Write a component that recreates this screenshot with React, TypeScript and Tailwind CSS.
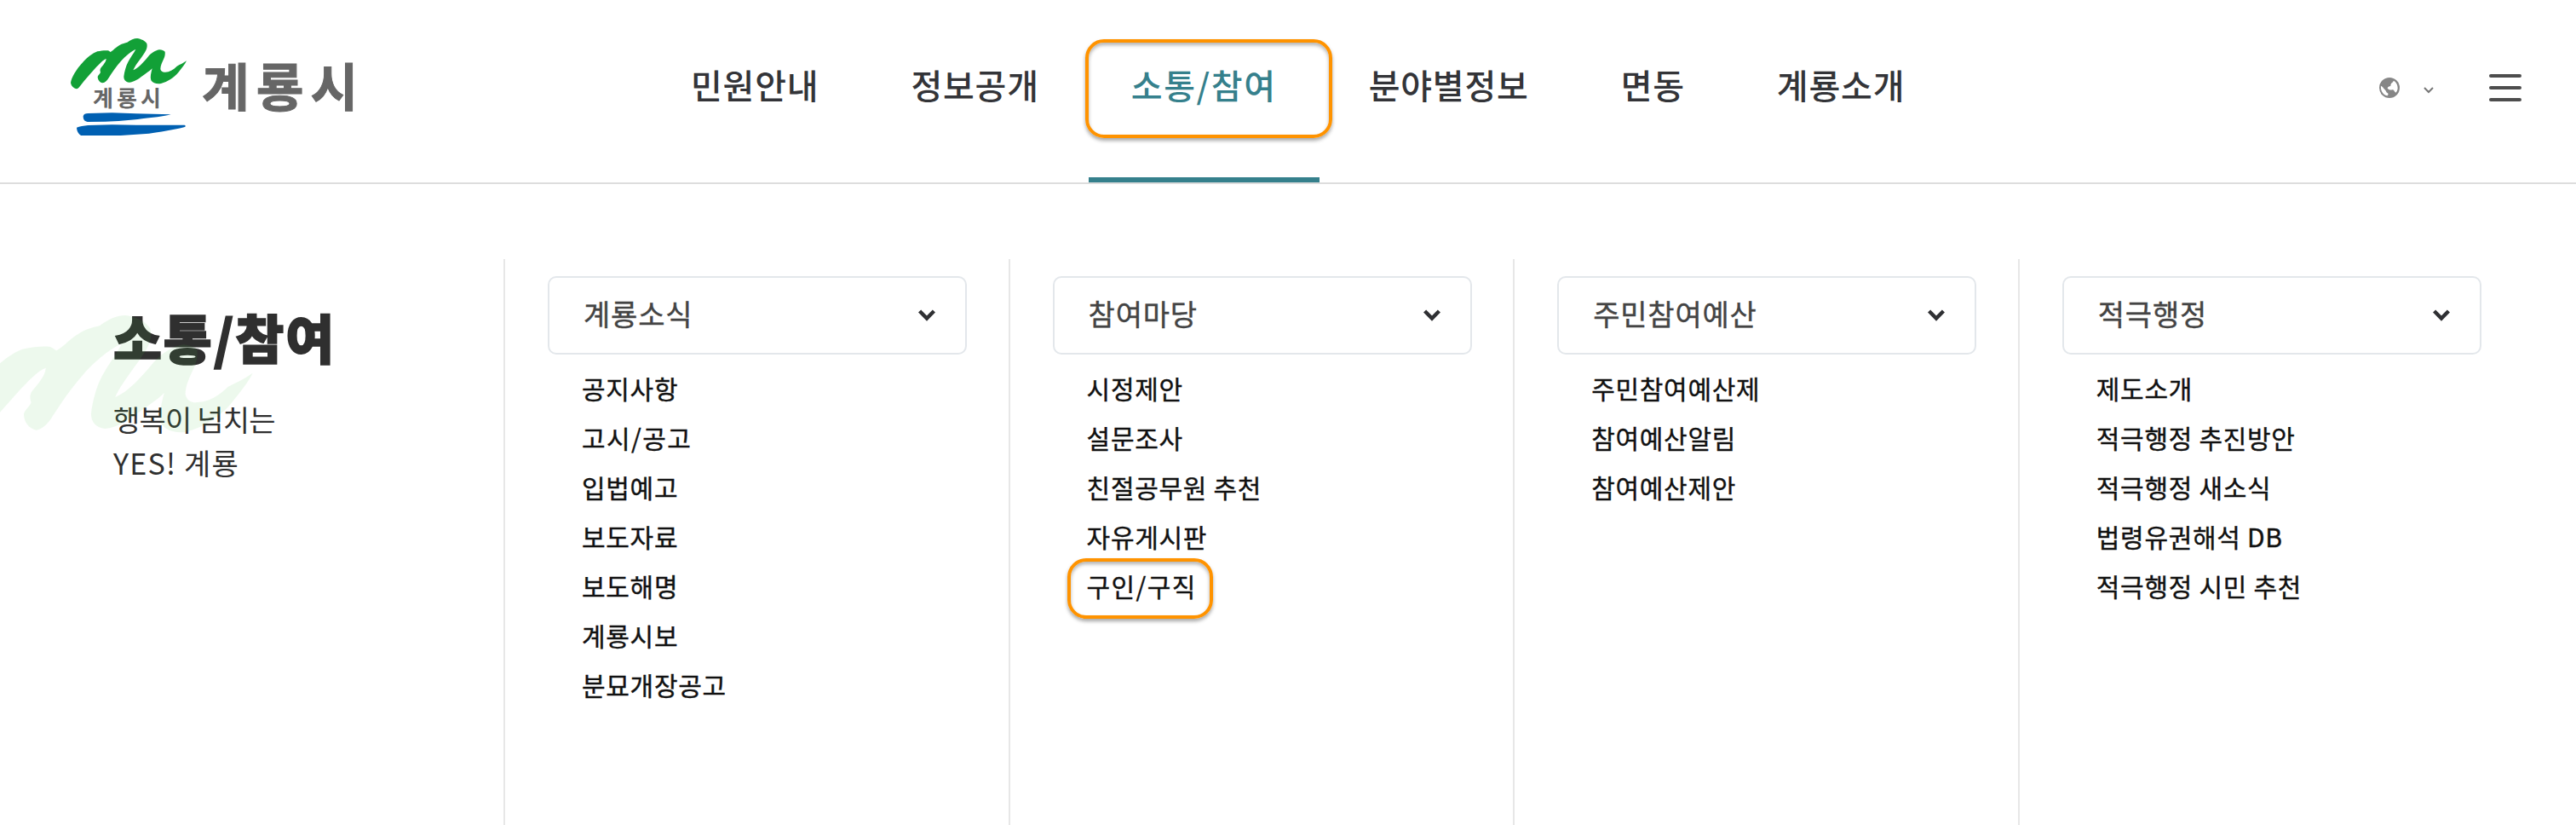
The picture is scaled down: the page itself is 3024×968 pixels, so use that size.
type MenuGroup = {
  title: string;
  links: string[];
};

const MARK =
  'M69 230C72 210 88 184 110 160C128 141 146 126 163 120C177 117 190 116 200 117C204 118 206 121 209 122C220 116 228 105 241 98C250 92 262 90 268 88C280 79 292 74 303 74C317 76 332 83 337 92C339 100 338 108 334 116C325 135 299 163 289 186C308 178 325 158 341 139C352 126 368 116 382 114C390 115 397 117 401 121C402 128 401 137 397 145C391 158 385 170 385 182C387 191 394 194 402 193C417 192 430 185 443 172C455 166 466 161 477 153C472 164 461 178 448 194C433 212 410 227 387 233C374 236 358 232 352 222C348 210 352 196 356 180C346 190 333 198 322 206C308 217 292 228 275 229C262 227 256 220 256 208C258 192 263 172 271 157C279 142 290 128 298 113C284 118 262 136 246 154C229 173 215 194 204 211C198 221 190 230 181 231C171 229 164 220 164 209C166 202 173 198 174 193C172 188 172 183 175 178C183 168 193 158 194 146C184 149 170 164 155 180C137 200 119 220 105 238C100 245 96 250 90 252C80 249 71 244 69 230Z';

const nav = [
  { label: '민원안내', active: false },
  { label: '정보공개', active: false },
  { label: '소통/참여', active: true },
  { label: '분야별정보', active: false },
  { label: '면동', active: false },
  { label: '계룡소개', active: false },
];

const groups: MenuGroup[] = [
  {
    title: '계룡소식',
    links: ['공지사항', '고시/공고', '입법예고', '보도자료', '보도해명', '계룡시보', '분묘개장공고'],
  },
  {
    title: '참여마당',
    links: ['시정제안', '설문조사', '친절공무원 추천', '자유게시판', '구인/구직'],
  },
  {
    title: '주민참여예산',
    links: ['주민참여예산제', '참여예산알림', '참여예산제안'],
  },
  {
    title: '적극행정',
    links: ['제도소개', '적극행정 추진방안', '적극행정 새소식', '법령유권해석 DB', '적극행정 시민 추천'],
  },
];

const HIGHLIGHTED_LINK = '구인/구직';

function Logo() {
  return (
    <svg viewBox="69 74 1050 345" className="mt-[45px] h-[115px] w-[350px]">
      <path d={MARK} fill="#12a037" />
      <path
        d="M113 348C115 341 120 338 130 338L215 336L300 339L422 342C400 349 350 353 320 357C280 363 230 366 190 367L128 368C116 366 113 358 113 348Z"
        fill="#0060b2"
      />
      <path
        d="M90 388C100 384 115 382 130 380L215 378L300 379L470 379C476 382 474 385 468 387C430 397 380 404 345 409L245 416L106 416C98 411 91 404 90 388Z"
        fill="#0060b2"
      />
      <g fill="#666" stroke="#666" fontWeight="700" fontFamily='"Noto Sans CJK KR", sans-serif'>
        <text x="147" y="313" fontSize="78" textLength="240" strokeWidth="0">
          계룡시
        </text>
        <text x="531" y="313" fontSize="182" textLength="550" strokeWidth="3">
          계룡시
        </text>
      </g>
    </svg>
  );
}

function Header() {
  return (
    <header className="flex h-[216px] border-b-2 border-[#ddd]">
      <div className="w-[811px] pl-[83px]">
        <Logo />
      </div>

      <nav className="flex gap-[108px] text-[40px] tracking-[0.8px] text-[#333438]">
        {nav.map((item) => (
          <a key={item.label} className="relative h-full pt-[69px] leading-[60px] font-medium whitespace-nowrap">
            {item.active ? <span className="tracking-[1.6px] text-[#35808c]">{item.label}</span> : item.label}
            {item.active && (
              <>
                <span className="absolute -inset-x-[50px] bottom-0 h-1.5 bg-[#35808c]" />
                <span className="absolute top-[46px] -left-[54px] h-[116px] w-[290px] rounded-[22px] border-4 border-[#ff9300] shadow-[0_3px_4px_rgba(0,0,0,0.35),inset_0_3px_4px_rgba(0,0,0,0.3)]" />
              </>
            )}
          </a>
        ))}
      </nav>

      {/* Language and full menu */}
      <div className="mr-16 ml-auto flex h-[206px] items-center">
        <svg viewBox="39 33 72 72" className="size-6">
          <circle cx="75" cy="69" r="36" fill="#868686" />
          <path d="M45 62C50 64 54 70 59 76C64 80 62 85 69 88C72 91 70 96 68 97C55 95 43 82 45 62Z" fill="#fff" />
          <path d="M68 71C68 65 75 64 79 63C79 57 81 53 85 51L90 44C99 49 105 60 104 72C103 79 100 84 97 86C92 84 92 77 87 76C80 77 72 76 68 71Z" fill="#fff" />
        </svg>
        <svg viewBox="0 0 12 8" className="mt-1.5 ml-7 h-2 w-3" fill="none" stroke="#777" strokeWidth="2">
          <path d="M1 1l5 5 5-5" />
        </svg>
        <div className="ml-[65px] flex flex-col gap-[9.5px]">
          <span className="h-[4.5px] w-[38px] rounded-full bg-[#4d4d4d]" />
          <span className="h-[4.5px] w-[38px] rounded-full bg-[#4d4d4d]" />
          <span className="h-[4.5px] w-[38px] rounded-full bg-[#4d4d4d]" />
        </div>
      </div>
    </header>
  );
}

function Intro() {
  return (
    <section className="relative w-[591px] pt-[56px] pl-[133px] text-[#2f2f2f]">
      <h2 className="text-[62px] leading-[70px] font-black tracking-[1.8px] [-webkit-text-stroke:1.6px_#2f2f2f]">
        소통/참여
      </h2>
      <p className="mt-9 text-[34px] leading-[51px] tracking-[-0.8px]">
        행복이 넘치는
        <br />
        <span className="tracking-[1.2px]">YES! 계룡</span>
      </p>
      <svg viewBox="69 74 408 162" className="absolute top-[66px] -left-[54px] h-[139px] w-[351px]">
        <path d={MARK} fill="#4fc04f" fillOpacity="0.1" />
      </svg>
    </section>
  );
}

function MenuColumn({ title, links }: MenuGroup) {
  return (
    <section className="w-[592.6px] border-l-2 border-[#e7e7e7] pt-5 pl-[50px]">
      <button className="flex h-[92px] w-[492px] items-center justify-between rounded-[10px] border-2 border-[#e3e7eb] pr-[35px] pl-10">
        <span className="-mt-1 text-[34px] leading-[50px] tracking-[0.8px] text-[#444] [-webkit-text-stroke:0.4px_#444]">
          {title}
        </span>
        <svg viewBox="0 0 20 14" className="h-3.5 w-5" fill="none" stroke="#2f3033" strokeWidth="4.4">
          <path d="M1.6 2l8.4 8.6L18.4 2" />
        </svg>
      </button>
      <ul className="mt-2.5 pl-10 text-[30px] leading-[58px] tracking-[0.7px] text-[#111] [-webkit-text-stroke:0.4px_#111]">
        {links.map((link) => (
          <li key={link}>
            <a className="relative">
              {link.includes('/') ? <span className="tracking-[1.4px]">{link}</span> : link}
              {link === HIGHLIGHTED_LINK && (
                <span className="absolute -top-[10px] -left-[23px] h-[71px] w-[171px] rounded-[22px] border-4 border-[#ff9300] shadow-[0_3px_4px_rgba(0,0,0,0.35),inset_0_3px_4px_rgba(0,0,0,0.3)]" />
              )}
            </a>
          </li>
        ))}
      </ul>
    </section>
  );
}

export default function App() {
  return (
    <div className='flex h-[968px] w-[3024px] flex-col overflow-hidden bg-white font-["Noto_Sans_CJK_KR",sans-serif]'>
      <Header />
      <main className="mt-[88px] flex flex-1">
        <Intro />
        {groups.map((group) => (
          <MenuColumn key={group.title} {...group} />
        ))}
      </main>
    </div>
  );
}
